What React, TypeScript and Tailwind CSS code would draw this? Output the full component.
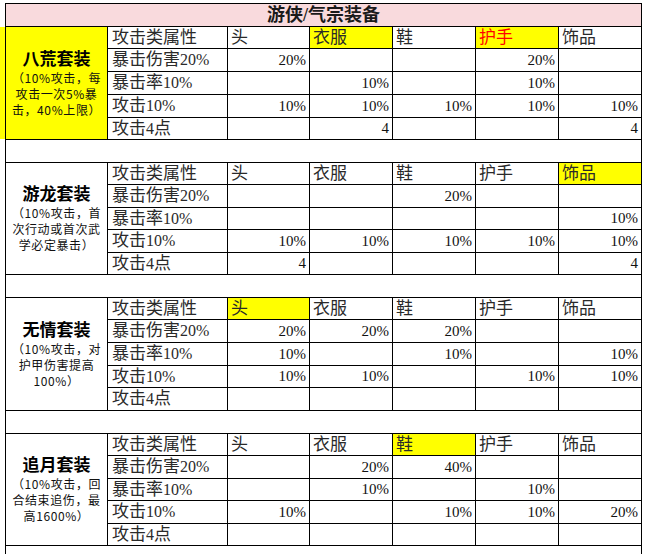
import type { ReactNode } from 'react'

type Hl = 'yellow' | 'red'

interface Group {
  name: string
  desc: string[]
  yellow?: boolean
  hl: Record<number, Hl>
  heights: number[]
  rows: string[][]
}

const COLS = ['头', '衣服', '鞋', '护手', '饰品']
const COL_W = ['w-[82px]', 'w-[83px]', 'w-[83px]', 'w-[83px]', 'w-[82px]']
const LABELS = ['暴击伤害20%', '暴击率10%', '攻击10%', '攻击4点']
const H: Record<number, string> = { 22: 'h-[22px]', 23: 'h-[23px]' }

const GROUPS: Group[] = [
  {
    name: '八荒套装',
    desc: ['（10%攻击，每', '攻击一次5%暴', '击，40%上限）'],
    yellow: true,
    hl: { 1: 'yellow', 3: 'red' },
    heights: [22, 23, 23, 23, 22],
    rows: [
      ['20%', '', '', '20%', ''],
      ['', '10%', '', '10%', ''],
      ['10%', '10%', '10%', '10%', '10%'],
      ['', '4', '', '', '4'],
    ],
  },
  {
    name: '游龙套装',
    desc: ['（10%攻击，首', '次行动或首次武', '学必定暴击）'],
    hl: { 4: 'yellow' },
    heights: [22, 23, 22, 23, 22],
    rows: [
      ['', '', '20%', '', ''],
      ['', '', '', '', '10%'],
      ['10%', '10%', '10%', '10%', '10%'],
      ['4', '', '', '', '4'],
    ],
  },
  {
    name: '无情套装',
    desc: ['（10%攻击，对', '护甲伤害提高', '100%）'],
    hl: { 0: 'yellow' },
    heights: [22, 23, 23, 22, 23],
    rows: [
      ['20%', '20%', '20%', '', ''],
      ['10%', '', '10%', '', '10%'],
      ['10%', '10%', '', '10%', '10%'],
      ['', '', '', '', ''],
    ],
  },
  {
    name: '追月套装',
    desc: ['（10%攻击，回', '合结束追伤，最', '高1600%）'],
    hl: { 2: 'yellow' },
    heights: [22, 23, 22, 23, 22],
    rows: [
      ['', '20%', '40%', '', ''],
      ['', '10%', '', '10%', ''],
      ['10%', '', '10%', '10%', '20%'],
      ['', '', '', '', ''],
    ],
  },
]

// CJK runs a little larger than the Times-like digits, as in the sheet
function mix(s: string): ReactNode[] {
  return s.split(/(\d+%?)/).filter(Boolean).map((part, i) =>
    /\d/.test(part) ? (
      <span key={i} className="font-['Liberation_Serif',serif] text-[16px]">
        {part}
      </span>
    ) : (
      <span key={i} className="text-[17px]">
        {part}
      </span>
    ),
  )
}

function GroupBlock({ g }: { g: Group }) {
  return (
    <div className="flex">
      <div
        className={`flex w-[102px] shrink-0 flex-col items-center justify-center border-r border-b border-black pt-[2px] ${
          g.yellow ? 'bg-[#ffff00]' : 'bg-white'
        }`}
      >
        <div className="text-[17px] leading-[18px] font-bold text-black">{g.name}</div>
        <div className="mt-[1px] text-center font-['Noto_Sans_CJK_SC',sans-serif] text-[12px] leading-[16px] tracking-[0.6px] whitespace-nowrap text-[#111]">
          {g.desc.map((line) => (
            <div key={line}>{line}</div>
          ))}
        </div>
      </div>

      <div className="flex flex-col">
        <div className={`flex ${H[g.heights[0]]}`}>
          <div className="flex w-[120px] items-center border-r border-b border-black pl-[4px] text-[#2a2a2a]">
            {mix('攻击类属性')}
          </div>
          {COLS.map((c, i) => {
            const hl = g.hl[i]
            return (
              <div
                key={c}
                className={`flex items-center pl-[3px] ${COL_W[i]} border-b border-black ${
                  i < 4 ? 'border-r' : ''
                } ${hl ? 'bg-[#ffff00]' : ''} ${hl === 'red' ? 'text-[#ff0000]' : 'text-[#2a2a2a]'}`}
              >
                {mix(c)}
              </div>
            )
          })}
        </div>

        {g.rows.map((row, r) => (
          <div key={r} className={`flex ${H[g.heights[r + 1]]}`}>
            <div className="flex w-[120px] items-center border-r border-b border-black pl-[4px] text-[#2a2a2a]">
              {mix(LABELS[r])}
            </div>
            {row.map((v, i) => (
              <div
                key={i}
                className={`flex items-center justify-end pr-[3px] ${COL_W[i]} border-b border-black ${
                  i < 4 ? 'border-r' : ''
                } font-['Liberation_Serif',serif] text-[15px] text-[#111]`}
              >
                {v}
              </div>
            ))}
          </div>
        ))}
      </div>
    </div>
  )
}

export default function App() {
  return (
    <div className="flex h-[554px] w-[651px] overflow-hidden bg-white font-['Liberation_Serif','Noto_Sans_CJK_SC',sans-serif]">
      <div className="w-[5px] shrink-0 pt-[27px]">
        <div className="h-[112px] bg-[#ffff00]" />
      </div>

      <div className="mt-[3px] w-[637px] shrink-0 self-start border-x border-t border-black">
        <div className="flex h-[23px] items-center justify-center border-b border-black bg-[#f9dadd] text-[18px] font-bold text-[#1a1a1a]">
          游侠/气宗装备
        </div>
        {GROUPS.map((g, i) => (
          <div key={g.name}>
            <GroupBlock g={g} />
            <div className={`h-[23px] ${i < GROUPS.length - 1 ? 'border-b border-black' : ''}`} />
          </div>
        ))}
      </div>
    </div>
  )
}
